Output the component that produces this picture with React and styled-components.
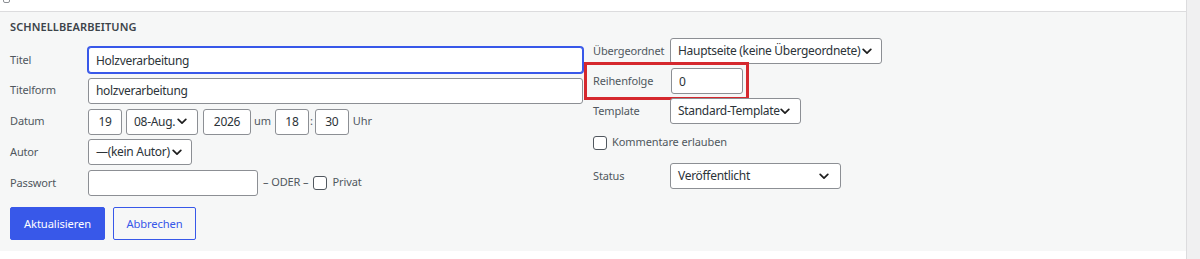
import React from "react";
import styled, { createGlobalStyle } from "styled-components";

const Global = createGlobalStyle`
  html, body { margin: 0; padding: 0; background: #fff; }
  body { font-family: "Noto Sans", "Open Sans", sans-serif; }
  * { box-sizing: border-box; }
`;

const BLUE = "#3858e9";

const Frame = styled.div`
  display: flex;
  width: 1200px;
  height: 259px;
  overflow: hidden;
  background: #fff;
`;

const Main = styled.div`
  flex: 0 0 1186px;
  display: flex;
  flex-direction: column;
`;

const ScrollTrack = styled.div`
  flex: 1;
  background: #f0f0f1;
  border-left: 1px solid #dcdcde;
`;

const TopStrip = styled.div`
  flex: 0 0 12px;
  background: #fff;
  border-bottom: 1px solid #dcdcde;
  overflow: hidden;
  padding-left: 3px;
`;

const TopCheck = styled.div`
  width: 7px;
  height: 10px;
  margin-top: -7px;
  border: 1px solid #8c8f94;
  border-radius: 2px;
`;

const Panel = styled.div`
  flex: 0 0 239px;
  background: #f6f7f7;
  padding: 7px 10px 0;
  display: flex;
  flex-direction: column;
`;

const Legend = styled.div`
  font-size: 11px;
  font-weight: 600;
  line-height: 16px;
  color: #3c434a;
  letter-spacing: 0.1px;
`;

const Columns = styled.div`
  display: flex;
  margin-top: 3px;
`;

const LeftCol = styled.div`
  width: 573px;
  padding-top: 9px;
  display: flex;
  flex-direction: column;
  gap: 4.75px;
`;

const RightCol = styled.div`
  margin-left: 10px;
  display: flex;
  flex-direction: column;
`;

const Row = styled.div`
  position: relative;
  display: grid;
  grid-template-columns: ${(p) => p.$label}px auto;
  align-items: center;
  height: 26px;
  margin-top: ${(p) => p.$mt || 0}px;
`;

const Label = styled.span`
  font-size: 11px;
  letter-spacing: -0.15px;
  color: #50575e;
  line-height: 16px;
  margin-top: -1px;
`;

const Fields = styled.div`
  display: flex;
  align-items: center;
  height: 26px;
`;

const TextInput = styled.input`
  width: ${(p) => p.$w}px;
  height: 26px;
  margin: 0 0 0 ${(p) => p.$ml || 0}px;
  padding: 0 ${(p) => (p.$center ? 0 : 7)}px;
  text-align: ${(p) => (p.$center ? "center" : "left")};
  font-family: inherit;
  font-size: 12px;
  letter-spacing: -0.3px;
  color: #2c3338;
  background: #fff;
  border: 1px solid ${(p) => (p.$focus ? BLUE : "#8c8f94")};
  box-shadow: ${(p) => (p.$focus ? `0 0 0 1px ${BLUE}` : "none")};
  border-radius: 3px;
  outline: none;
`;

const SelectBox = styled.div`
  width: ${(p) => p.$w}px;
  height: 26px;
  margin-left: ${(p) => p.$ml || 0}px;
  padding: 0 ${(p) => p.$pr || 10}px 0 7px;
  display: flex;
  align-items: center;
  justify-content: space-between;
  font-size: 12px;
  letter-spacing: -0.3px;
  color: #2c3338;
  background: #fff;
  border: 1px solid #8c8f94;
  border-radius: 3px;
  white-space: nowrap;
`;

const SelectText = styled.span`
  line-height: 16px;
`;

const Chevron = () => (
  <svg width="10" height="7" viewBox="0 0 10 7" style={{ flex: "0 0 auto" }}>
    <path d="M1.2 1.4 L5 5.2 L8.8 1.4" fill="none" stroke="#1e1e1e" strokeWidth="1.7" strokeLinecap="round" strokeLinejoin="round" />
  </svg>
);

const Select = ({ w, ml, pr, children }) => (
  <SelectBox $w={w} $ml={ml} $pr={pr}>
    <SelectText>{children}</SelectText>
    <Chevron />
  </SelectBox>
);

const Inline = styled.span`
  font-size: 11px;
  letter-spacing: -0.1px;
  color: #50575e;
  line-height: 16px;
  margin: ${(p) => p.$m || "0"};
  margin-top: -2px;
  white-space: nowrap;
`;

const Check = styled.span`
  display: inline-block;
  flex: 0 0 14px;
  width: 14px;
  height: 14px;
  margin-left: ${(p) => p.$ml || 0}px;
  background: #fff;
  border: 1px solid #50575e;
  border-radius: 3px;
`;

const CheckRow = styled.div`
  display: flex;
  align-items: center;
  height: 18px;
  margin-top: 10px;
`;

const Highlight = styled.div`
  position: absolute;
  left: -9px;
  top: -6px;
  width: 165px;
  height: 38px;
  border: 3px solid #d5282e;
  pointer-events: none;
`;

const ButtonRow = styled.div`
  display: flex;
  margin-top: 11px;
  gap: 8px;
`;

const Button = styled.button`
  width: ${(p) => p.$w}px;
  height: 33px;
  padding: 0;
  font-family: inherit;
  font-size: 11.2px;
  letter-spacing: -0.1px;
  border-radius: 2px;
  cursor: pointer;
  color: ${(p) => (p.$primary ? "#fff" : BLUE)};
  background-color: ${(p) => (p.$primary ? BLUE : "#f6f7f7")};
  border-width: 1px;
  border-style: solid;
  border-color: ${BLUE};
`;

const Bottom = styled.div`
  flex: 1;
  background: #fff;
`;

export default function App() {
  return (
    <>
      <Global />
      <Frame>
        <Main>
          <TopStrip>
            <TopCheck />
          </TopStrip>
          <Panel>
            <Legend>SCHNELLBEARBEITUNG</Legend>
            <Columns>
              <LeftCol>
                <Row $label={78}>
                  <Label>Titel</Label>
                  <TextInput $w={495} $focus readOnly value="Holzverarbeitung" />
                </Row>
                <Row $label={78}>
                  <Label>Titelform</Label>
                  <TextInput $w={495} readOnly value="holzverarbeitung" />
                </Row>
                <Row $label={78}>
                  <Label>Datum</Label>
                  <Fields>
                    <TextInput $w={34} $center readOnly value="19" />
                    <Select w={72} ml={4}>08-Aug.</Select>
                    <TextInput $w={48} $ml={5} $center readOnly value="2026" />
                    <Inline $m="0 4px 0 3px">um</Inline>
                    <TextInput $w={34} $center readOnly value="18" />
                    <Inline $m="0 1px 0 1px">:</Inline>
                    <TextInput $w={34} $ml={1} $center readOnly value="30" />
                    <Inline $m="0 0 0 4px">Uhr</Inline>
                  </Fields>
                </Row>
                <Row $label={78}>
                  <Label>Autor</Label>
                  <Fields>
                    <Select w={104} pr={9}>—(kein Autor)</Select>
                  </Fields>
                </Row>
                <Row $label={78}>
                  <Label>Passwort</Label>
                  <Fields>
                    <TextInput $w={170} readOnly value="" />
                    <Inline $m="0 0 0 5px">– ODER –</Inline>
                    <Check $ml={4} />
                    <Inline $m="0 0 0 6px">Privat</Inline>
                  </Fields>
                </Row>
              </LeftCol>
              <RightCol>
                <Row $label={77}>
                  <Label>Übergeordnet</Label>
                  <Fields>
                    <Select w={212} pr={9}>Hauptseite (keine Übergeordnete)</Select>
                  </Fields>
                </Row>
                <Row $label={77} $mt={4}>
                  <Highlight />
                  <Label>Reihenfolge</Label>
                  <Fields>
                    <TextInput $w={72} $ml={1} readOnly value="0" />
                  </Fields>
                </Row>
                <Row $label={77} $mt={4}>
                  <Label>Template</Label>
                  <Fields>
                    <Select w={131}>Standard-Template</Select>
                  </Fields>
                </Row>
                <CheckRow>
                  <Check />
                  <Inline $m="0 0 0 5px">Kommentare erlauben</Inline>
                </CheckRow>
                <Row $label={77} $mt={11}>
                  <Label>Status</Label>
                  <Fields>
                    <Select w={171} pr={11}>Veröffentlicht</Select>
                  </Fields>
                </Row>
              </RightCol>
            </Columns>
            <ButtonRow>
              <Button $primary $w={95}>Aktualisieren</Button>
              <Button $w={83}>Abbrechen</Button>
            </ButtonRow>
          </Panel>
          <Bottom />
        </Main>
        <ScrollTrack />
      </Frame>
    </>
  );
}
